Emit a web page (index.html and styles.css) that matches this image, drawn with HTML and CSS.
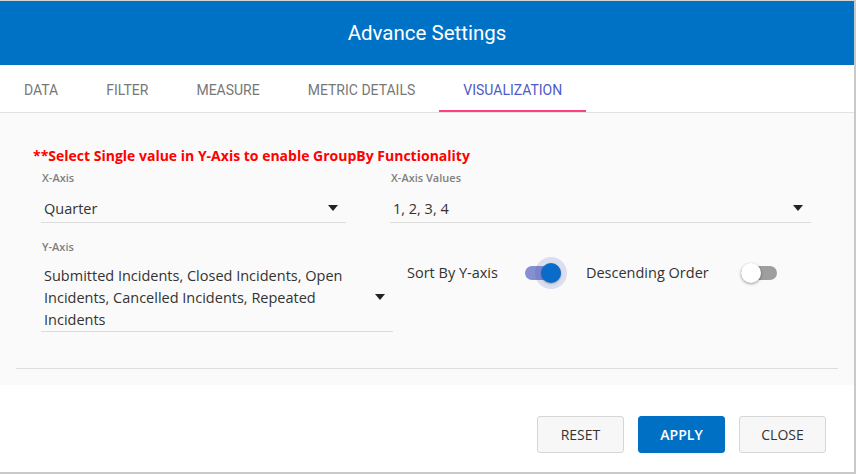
FILE: index.html
```html
<!DOCTYPE html>
<html>
<head>
<meta charset="utf-8">
<link rel="stylesheet" href="styles.css">
</head>
<body>
<div class="dialog">
  <header class="dlg-header">Advance Settings</header>
  <nav class="tabs">
    <div class="tab">DATA</div>
    <div class="tab">FILTER</div>
    <div class="tab">MEASURE</div>
    <div class="tab">METRIC DETAILS</div>
    <div class="tab active">VISUALIZATION</div>
  </nav>
  <section class="content">
    <div class="inner">
      <div class="warning">**Select Single value in Y-Axis to enable GroupBy Functionality</div>
      <div class="row row1">
        <div class="field f-x">
          <div class="label">X-Axis</div>
          <div class="select s1"><span class="value">Quarter</span><span class="arrow"></span></div>
        </div>
        <div class="field f-xv">
          <div class="label">X-Axis Values</div>
          <div class="select s1"><span class="value">1, 2, 3, 4</span><span class="arrow"></span></div>
        </div>
      </div>
      <div class="row row2">
        <div class="field f-y">
          <div class="label">Y-Axis</div>
          <div class="select s2"><span class="value">Submitted Incidents, Closed Incidents, Open Incidents, Cancelled Incidents, Repeated Incidents</span><span class="arrow"></span></div>
        </div>
        <div class="toggles">
          <span class="tlabel">Sort By Y-axis</span>
          <span class="toggle on"><span class="track"></span><span class="thumb"></span></span>
          <span class="tlabel t2">Descending Order</span>
          <span class="toggle off"><span class="track"></span><span class="thumb"></span></span>
        </div>
      </div>
    </div>
  </section>
  <footer class="actions">
    <button class="btn">RESET</button>
    <button class="btn primary">APPLY</button>
    <button class="btn">CLOSE</button>
  </footer>
</div>
</body>
</html>
```
FILE: styles.css
```css
html, body {
  margin: 0;
  padding: 0;
}
body {
  background: #c9c9c9;
  width: 856px;
  height: 474px;
  overflow: hidden;
  font-family: "Open Sans", "Liberation Sans", sans-serif;
  color: #333;
}
.dialog {
  width: 854px;
  height: 471px;
  background: #fff;
  border-top: 1px solid #d4d4d4;
  display: flex;
  flex-direction: column;
}
.dlg-header {
  height: 64px;
  flex: none;
  background: #0072c6;
  color: #fff;
  font-family: Roboto, "Liberation Sans", sans-serif;
  font-size: 20.5px;
  display: flex;
  align-items: center;
  justify-content: center;
}
.tabs {
  height: 47px;
  flex: none;
  border-bottom: 1px solid #e2e2e2;
  display: flex;
  font-family: Roboto, "Liberation Sans", sans-serif;
  font-size: 14px;
  color: #777;
}
.tab {
  padding: 2px 24px 0;
  display: flex;
  align-items: center;
  box-sizing: border-box;
  height: 47px;
}
.tab.active {
  color: #4f5bc4;
  border-bottom: 2px solid #ff4081;
  padding-top: 4px;
}
.content {
  height: 272px;
  flex: none;
  box-sizing: border-box;
  background: #fafafa;
  padding: 0 16px;
}
.inner {
  height: 256px;
  box-sizing: border-box;
  border-bottom: 1px solid #dedede;
  padding: 34px 0 0 17px;
}
.warning {
  color: #ff0000;
  font-weight: 700;
  font-size: 14px;
  line-height: 18px;
}
.row {
  display: flex;
  padding-left: 8px;
}
.row1 {
  margin-top: 6px;
  gap: 44px;
}
.row2 {
  margin-top: 17px;
  gap: 14px;
}
.label {
  font-size: 11px;
  line-height: 14px;
  font-weight: 600;
  color: #808080;
  padding-left: 1px;
}
.select {
  display: flex;
  align-items: center;
  border-bottom: 1px solid #dcdcdc;
  font-size: 14.5px;
  color: #333;
  padding-left: 3px;
  padding-right: 8px;
}
.s1 {
  padding-top: 14px;
  padding-bottom: 3px;
  line-height: 20px;
}
.s2 {
  padding-top: 11px;
  padding-bottom: 0;
  line-height: 22px;
}
.value {
  flex: 1;
}
.s2 .value {
  padding-right: 20px;
}
.arrow {
  width: 0;
  height: 0;
  border-left: 5.5px solid transparent;
  border-right: 5.5px solid transparent;
  border-top: 6px solid #222;
  margin-bottom: 3px;
}
.s2 .arrow {
  margin-bottom: 2px;
}
.f-x { width: 305px; }
.f-xv { width: 421px; }
.f-y { width: 352px; }
.toggles {
  display: flex;
  align-items: center;
  height: 20px;
  margin-top: 23px;
  font-size: 14.5px;
  color: #333;
}
.tlabel { line-height: 20px; }
.toggle {
  position: relative;
  width: 36px;
  height: 20px;
  margin-left: 27px;
  display: inline-block;
}
.toggle.off { margin-left: 32px; }
.t2 { margin-left: 25px; }
.track {
  position: absolute;
  left: 0;
  top: 3px;
  width: 36px;
  height: 14px;
  border-radius: 7px;
}
.on .track { background: #8490d0; }
.off .track { background: #9e9e9e; }
.thumb {
  position: absolute;
  top: 0;
  width: 20px;
  height: 20px;
  border-radius: 50%;
}
.on .thumb {
  left: 16px;
  background: #0b6bc9;
  box-shadow: 0 0 0 6px rgba(63, 81, 181, 0.17), 0 1px 2px rgba(0,0,0,0.3);
}
.off .thumb {
  left: 0;
  background: #fff;
  box-shadow: 0 1px 3px rgba(0, 0, 0, 0.4);
}
.actions {
  flex: 1;
  display: flex;
  justify-content: flex-end;
  align-items: flex-start;
  gap: 14px;
  padding: 31px 28px 0 0;
}
.btn {
  width: 87px;
  height: 37px;
  border: 1px solid #d6d6d6;
  background: #f7f7f7;
  border-radius: 3px;
  font-family: "Open Sans", "Liberation Sans", sans-serif;
  font-size: 14px;
  color: #333;
  padding: 0;
}
.btn.primary {
  background: #0070c4;
  border-color: #0070c4;
  color: #fff;
  font-weight: 600;
}
```
